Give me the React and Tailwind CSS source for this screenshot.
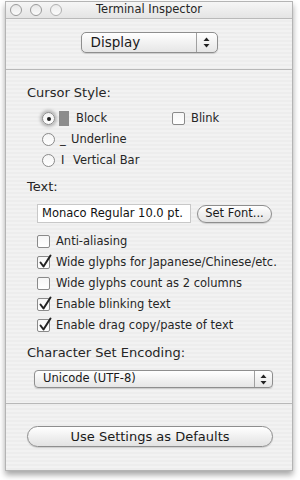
import React from "react";

const font = { fontFamily: '"DejaVu Sans", "Liberation Sans", sans-serif' };

function Radio({ checked }) {
  return (
    <span
      className={
        "relative inline-flex h-[13px] w-[13px] items-center justify-center rounded-full border border-[#8a8a8a] bg-gradient-to-b from-[#f4f4f4] to-[#ffffff] " +
        (checked ? "shadow-[0_0_3px_2px_rgba(120,120,120,0.45)]" : "")
      }
    >
      {checked && <span className="h-[4px] w-[4px] rounded-full bg-[#222]" />}
    </span>
  );
}

function Check({ checked }) {
  return (
    <span className="relative inline-block h-[13px] w-[13px] rounded-[2px] border border-[#8a8a8a] bg-gradient-to-b from-[#f6f6f6] to-[#ffffff]">
      {checked && (
        <svg className="absolute left-[1px] top-[-3px]" width="14" height="15" viewBox="0 0 14 15">
          <path d="M1.5 8.5 L4.5 12.5 L11.5 1.5" fill="none" stroke="#222" strokeWidth="2" strokeLinecap="round" strokeLinejoin="round" />
        </svg>
      )}
    </span>
  );
}

function CheckRow({ checked, label }) {
  return (
    <div className="flex h-[21px] items-center gap-[6px] pl-[31px]">
      <Check checked={checked} />
      <span className="text-[11.5px] text-[#262626]">{label}</span>
    </div>
  );
}

function Arrows() {
  return (
    <svg width="7" height="11" viewBox="0 0 7 11">
      <path d="M3.5 0.5 L6.5 4 L0.5 4 Z" fill="#222" />
      <path d="M3.5 10.5 L6.5 7 L0.5 7 Z" fill="#222" />
    </svg>
  );
}

export default function App() {
  return (
    <div className="h-[480px] w-[300px] bg-white pl-[5px] pt-[1px]" style={font}>
      <div className="flex h-[470px] w-[288px] flex-col border border-[#b4b4b4] bg-[repeating-linear-gradient(0deg,#ededed_0px,#ededed_2px,#f2f2f2_2px,#f2f2f2_4px)] shadow-[0_4px_6px_rgba(0,0,0,0.35)]">
        {/* title bar */}
        <div className="relative flex h-[17px] items-center justify-center border-b border-[#b9b9b9] bg-gradient-to-b from-[#f6f6f6] to-[#e4e4e4]">
          <div className="absolute left-[4px] top-[2px] flex gap-[8px]">
            <span className="h-[12px] w-[12px] rounded-full border border-[#9a9a9a] bg-gradient-to-b from-[#e8e8e8] to-[#fbfbfb]" />
            <span className="h-[12px] w-[12px] rounded-full border border-[#9a9a9a] bg-gradient-to-b from-[#e8e8e8] to-[#fbfbfb]" />
            <span className="h-[12px] w-[12px] rounded-full border border-[#b0b0b0] bg-gradient-to-b from-[#ececec] to-[#fbfbfb]" />
          </div>
          <span className="text-[11.5px] leading-none text-[#262626]">Terminal Inspector</span>
        </div>

        {/* top popup */}
        <div className="flex h-[51px] justify-center border-b border-[#b8b8b8] pt-[13px]">
          <div className="flex h-[21px] w-[137px] items-center rounded-[5px] border border-[#8e8e8e] bg-gradient-to-b from-[#ffffff] via-[#f2f2f2] to-[#e6e6e6] shadow-[0_1px_1px_rgba(0,0,0,0.15)]">
            <span className="flex-1 pl-[9px] text-[13.5px] text-[#1a1a1a]">Display</span>
            <span className="flex h-full w-[21px] items-center justify-center border-l border-[#a0a0a0]">
              <Arrows />
            </span>
          </div>
        </div>

        {/* middle */}
        <div className="flex flex-1 flex-col border-b border-[#b8b8b8]">
          <div className="mt-[14px] h-[18px] pl-[21px] text-[13px] leading-[18px] text-[#262626]">Cursor Style:</div>
          <div className="mt-[6px] flex h-[21px] items-center pl-[36px]">
            <Radio checked />
            <span className="ml-[4px] h-[15px] w-[10px] bg-[#8c8c8c]" />
            <span className="ml-[7px] w-[96px] text-[11.5px] text-[#262626]">Block</span>
            <Check />
            <span className="ml-[6px] text-[11.5px] text-[#262626]">Blink</span>
          </div>
          <div className="flex h-[21px] items-center pl-[36px]">
            <Radio />
            <span className="ml-[5px] w-[8px] text-[11.5px] text-[#262626]">_</span>
            <span className="ml-[3px] text-[11.5px] text-[#262626]">Underline</span>
          </div>
          <div className="flex h-[21px] items-center pl-[36px]">
            <Radio />
            <span className="ml-[6px] w-[8px] text-[11.5px] text-[#262626]">I</span>
            <span className="ml-[4px] text-[11.5px] text-[#262626]">Vertical Bar</span>
          </div>

          <div className="mt-[7px] h-[18px] pl-[21px] text-[13px] leading-[18px] text-[#262626]">Text:</div>
          <div className="mt-[8px] flex h-[19px] items-center pl-[31px]">
            <div className="flex h-[19px] w-[154px] items-center border border-[#c8c8c8] bg-white pl-[4px] text-[11.5px] text-[#111]">
              Monaco Regular 10.0 pt.
            </div>
            <div className="ml-[6px] flex h-[18px] w-[75px] items-center justify-center rounded-full border border-[#8e8e8e] bg-gradient-to-b from-[#ffffff] via-[#f0f0f0] to-[#e4e4e4] text-[11.5px] text-[#1a1a1a] shadow-[0_1px_1px_rgba(0,0,0,0.15)]">
              Set Font...
            </div>
          </div>

          <div className="mt-[8px]">
            <CheckRow label="Anti-aliasing" />
            <CheckRow checked label="Wide glyphs for Japanese/Chinese/etc." />
            <CheckRow label="Wide glyphs count as 2 columns" />
            <CheckRow checked label="Enable blinking text" />
            <CheckRow checked label="Enable drag copy/paste of text" />
          </div>

          <div className="mt-[8px] h-[18px] pl-[21px] text-[13px] leading-[18px] text-[#262626]">Character Set Encoding:</div>
          <div className="ml-[28px] mt-[8px] flex h-[18px] w-[239px] items-center rounded-[4px] border border-[#8e8e8e] bg-gradient-to-b from-[#ffffff] via-[#f2f2f2] to-[#e6e6e6] shadow-[0_1px_1px_rgba(0,0,0,0.15)]">
            <span className="flex-1 pl-[8px] text-[11.5px] text-[#1a1a1a]">Unicode (UTF-8)</span>
            <span className="flex h-full w-[18px] items-center justify-center border-l border-[#a0a0a0]">
              <Arrows />
            </span>
          </div>
        </div>

        {/* bottom */}
        <div className="flex h-[66px] pt-[22px] pl-[21px]">
          <div className="flex h-[21px] w-[246px] items-center justify-center rounded-full border border-[#8e8e8e] bg-gradient-to-b from-[#ffffff] via-[#f0f0f0] to-[#e2e2e2] text-[13px] text-[#1a1a1a] shadow-[0_1px_1px_rgba(0,0,0,0.15)]">
            Use Settings as Defaults
          </div>
        </div>
      </div>
    </div>
  );
}
